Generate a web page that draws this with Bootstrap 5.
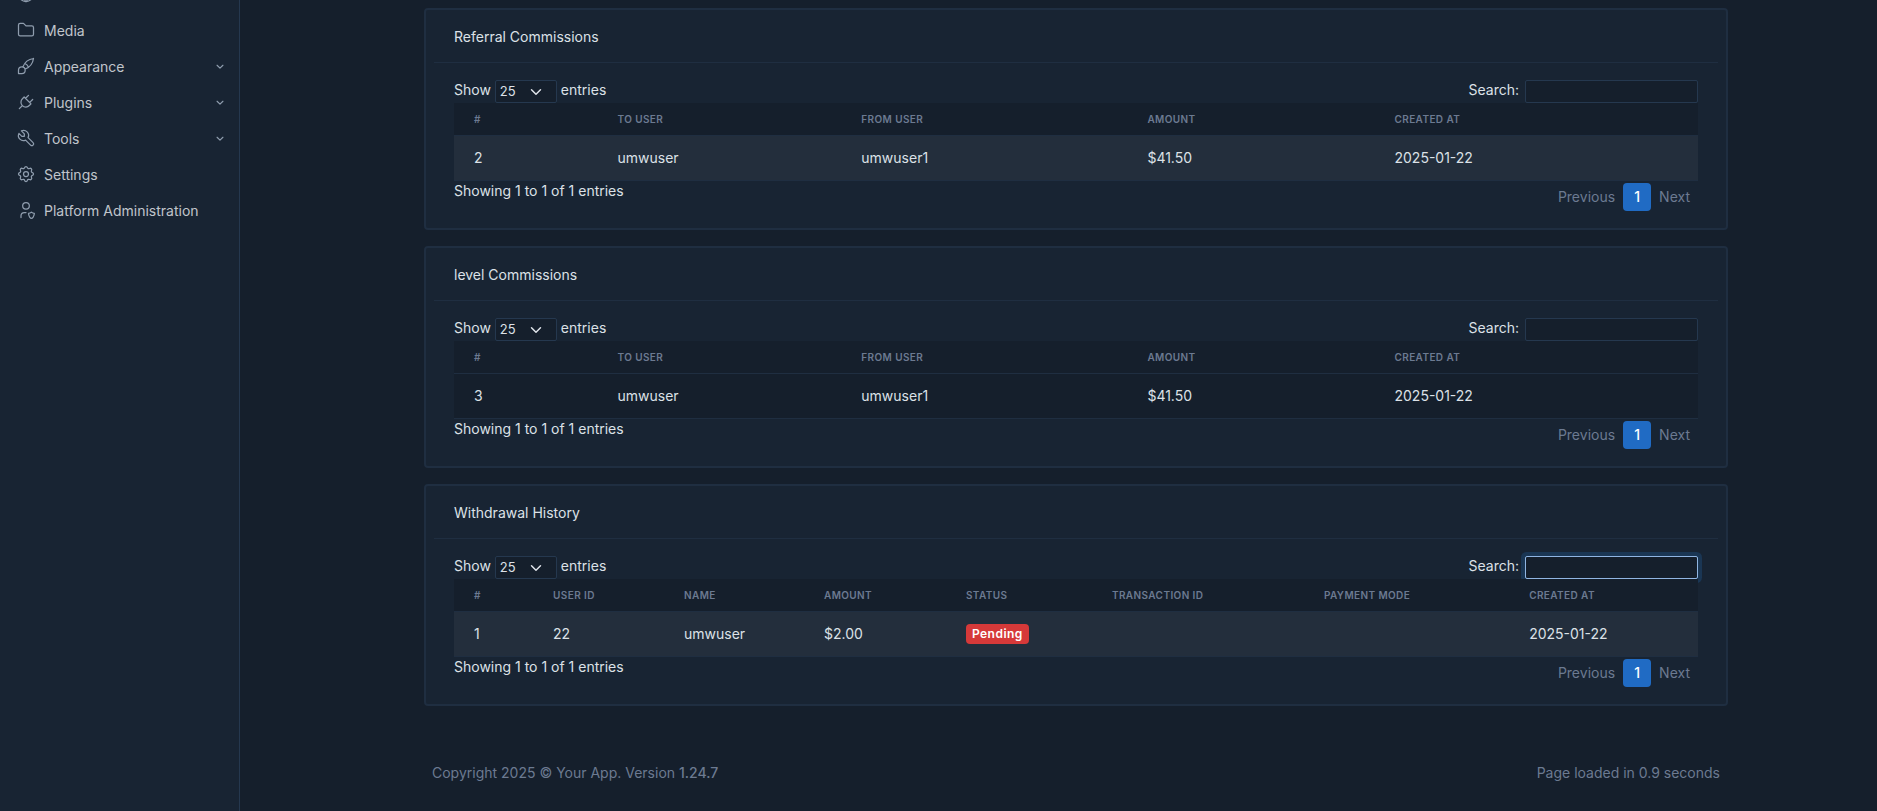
<!DOCTYPE html>
<html lang="en" data-bs-theme="dark">
<head>
<meta charset="utf-8">
<meta name="viewport" content="width=device-width, initial-scale=1">
<title>Commissions</title>
<link href="https://cdn.jsdelivr.net/npm/bootstrap@5.3.0/dist/css/bootstrap.min.css" rel="stylesheet">
<style>
  body { font-family: Inter, "Liberation Sans", sans-serif; font-size: 14px; line-height: 20px; background: #151f2c; color: #dce1e7; min-height: 100vh; }
  .side-menu { width: 240px; background: #182433; border-right: 1px solid #25384f; overflow: hidden; }
  .side-menu .nav { margin-top: -23px; }
  .side-menu .nav-link { height: 36px; padding: 0 12px 0 16px; gap: 8px; color: #c0c5cb; }
  .side-menu svg { flex: none; fill: none; stroke: #8f9dae; stroke-width: 2; stroke-linecap: round; stroke-linejoin: round; }
  .side-menu .menu-icon { stroke-width: 1.5; margin-top: -2px; }
  .page-area { min-width: 0; padding-left: 35px; }
  .page-area .container-xxl { max-width: 1320px; padding: 8px 8px 0; }
  .panel { background: #182433; border: 2px solid #1f2e41; border-radius: 4px; padding: 0 8px; margin-bottom: 16px; }
  .panel-title { font-size: 14px; line-height: 20px; font-weight: 400; color: #dce1e7; margin: 0; padding: 17px 20px 15px; border-bottom: 1px solid #1f2e41; }
  .panel-content { padding: 17px 20px; }
  .panel label { height: 23px; }
  .panel .form-select, .panel .form-control { height: 23px; min-height: 0; padding: 0 4px; border: 1px solid #25384f; border-radius: 2px; background-color: #151f2c; color: #dce1e7; font-size: 13px; line-height: 21px; }
  .panel .form-select { width: 62px; background-image: url("data:image/svg+xml,%3csvg xmlns='http://www.w3.org/2000/svg' viewBox='0 0 16 16'%3e%3cpath fill='none' stroke='%23dce1e7' stroke-linecap='round' stroke-linejoin='round' stroke-width='2' d='m2 5 6 6 6-6'/%3e%3c/svg%3e"); background-size: 12px; background-position: right 14px center; }
  .panel .form-control { width: 173px; margin-left: 6px; }
  .panel .form-control:focus { border-color: #90b5e2; box-shadow: 0 0 0 4px #1a3654; }
  .data-grid { position: relative; table-layout: fixed; margin: 0; --bs-table-bg: #151f2c; --bs-table-color: #dce1e7; --bs-table-striped-bg: #232e3c; --bs-table-striped-color: #dce1e7; border-color: #1f2e41; }
  .data-grid th { padding: 8px; font-size: 10px; line-height: 16px; font-weight: 600; letter-spacing: 0.04em; text-transform: uppercase; color: #6c7a91; }
  .data-grid td { padding: 12px 8px; line-height: 20px; }
  .data-grid th:first-child, .data-grid td:first-child { padding-left: 20px; }
  .status-tag { display: inline-block; font-size: 12px; line-height: 14px; font-weight: 600; padding: 3px 6px; border-radius: 4px; background: #d63939; color: #fff; letter-spacing: 0.04em; vertical-align: top; }
  .pagination { margin: 2px 0 0; --bs-pagination-font-size: 14px; }
  .pagination .page-item .page-link { min-width: 28px; height: 28px; margin: 0; padding: 4px 8px; border: 0; border-radius: 4px; text-align: center; line-height: 20px; background: none; color: #6c7a91; }
  .pagination .page-item.active .page-link { background: #206bc4; color: #fff; font-weight: 500; }
  .foot { color: #6c7a91; padding: 41px 8px 0; }
</style>
</head>
<body>
<div class="d-flex min-vh-100">
  <aside class="side-menu flex-shrink-0">
    <nav class="nav flex-column" aria-label="Main menu">
      <a class="nav-link d-flex align-items-center" href="#"><svg class="menu-icon" width="20" height="20" viewBox="0 0 24 24"><circle cx="12" cy="12" r="9"/><path d="M3.600 9h16.800M3.600 15h16.800M11.500 3a17 17 0 0 0 0 18M12.500 3a17 17 0 0 1 0 18"/></svg>Locations</a>
      <a class="nav-link d-flex align-items-center" href="#"><svg class="menu-icon" width="20" height="20" viewBox="0 0 24 24"><path d="M5 4h4l3 3h7a2 2 0 0 1 2 2v8a2 2 0 0 1 -2 2h-14a2 2 0 0 1 -2 -2v-11a2 2 0 0 1 2 -2"/></svg>Media</a>
      <a class="nav-link d-flex align-items-center" href="#"><svg class="menu-icon" width="20" height="20" viewBox="0 0 24 24"><path d="M3 21v-4a4 4 0 1 1 4 4h-4M21 3a16 16 0 0 0 -12.800 10.200M21 3a16 16 0 0 1 -10.200 12.800M10.600 9a9 9 0 0 1 4.400 4.400"/></svg>Appearance<svg class="ms-auto" width="14" height="14" viewBox="0 0 24 24"><path d="m7 9 5 5 5-5"/></svg></a>
      <a class="nav-link d-flex align-items-center" href="#"><svg class="menu-icon" width="20" height="20" viewBox="0 0 24 24"><path d="M9.785 6l8.215 8.215l-2.054 2.054a5.810 5.810 0 1 1 -8.215 -8.215l2.054 -2.054zM4 20l3.500 -3.500M15 4l-3.500 3.500M20 9l-3.500 3.500"/></svg>Plugins<svg class="ms-auto" width="14" height="14" viewBox="0 0 24 24"><path d="m7 9 5 5 5-5"/></svg></a>
      <a class="nav-link d-flex align-items-center" href="#"><svg class="menu-icon" width="20" height="20" viewBox="0 0 24 24"><path d="M7 10h3v-3l-3.500 -3.500a6 6 0 0 1 8 8l6 6a2 2 0 0 1 -3 3l-6 -6a6 6 0 0 1 -8 -8l3.500 3.500"/></svg>Tools<svg class="ms-auto" width="14" height="14" viewBox="0 0 24 24"><path d="m7 9 5 5 5-5"/></svg></a>
      <a class="nav-link d-flex align-items-center" href="#"><svg class="menu-icon" width="20" height="20" viewBox="0 0 24 24"><path d="M10.325 4.317c.426 -1.756 2.924 -1.756 3.350 0a1.724 1.724 0 0 0 2.573 1.066c1.543 -.94 3.310 .826 2.370 2.370a1.724 1.724 0 0 0 1.065 2.572c1.756 .426 1.756 2.924 0 3.350a1.724 1.724 0 0 0 -1.066 2.573c.94 1.543 -.826 3.310 -2.370 2.370a1.724 1.724 0 0 0 -2.572 1.065c-.426 1.756 -2.924 1.756 -3.350 0a1.724 1.724 0 0 0 -2.573 -1.066c-1.543 .94 -3.310 -.826 -2.370 -2.370a1.724 1.724 0 0 0 -1.065 -2.572c-1.756 -.426 -1.756 -2.924 0 -3.350a1.724 1.724 0 0 0 1.066 -2.573c-.94 -1.543 .826 -3.310 2.370 -2.370c1 .608 2.296 .070 2.572 -1.065z"/><circle cx="12" cy="12" r="3"/></svg>Settings</a>
      <a class="nav-link d-flex align-items-center" href="#"><svg class="menu-icon" width="20" height="20" viewBox="0 0 24 24"><path d="M6 21v-2a4 4 0 0 1 4 -4h2M22 16c0 4 -2.500 6 -3.500 6s-3.500 -2 -3.500 -6c1 0 2.500 -.5 3.500 -1.500c1 1 2.500 1.500 3.500 1.500zM8 7a4 4 0 1 0 8 0a4 4 0 0 0 -8 0"/></svg>Platform Administration</a>
    </nav>
  </aside>

  <main class="page-area flex-grow-1">
    <div class="container-xxl">
      <section class="panel">
        <h2 class="panel-title">Referral Commissions</h2>
        <div class="panel-content">
          <div class="d-flex justify-content-between">
            <label class="d-flex align-items-start gap-1">Show <select class="form-select"><option>10</option><option selected>25</option><option>50</option></select> entries</label>
            <label class="d-flex align-items-start">Search: <input type="search" class="form-control"></label>
          </div>
          <table class="table table-striped data-grid">
            <colgroup><col style="width:12.5%"><col style="width:19.6%"><col style="width:23%"><col style="width:19.86%"><col></colgroup>
            <thead><tr><th>#</th><th>To user</th><th>From user</th><th>Amount</th><th>Created at</th></tr></thead>
            <tbody><tr><td>2</td><td>umwuser</td><td>umwuser1</td><td>$41.50</td><td>2025-01-22</td></tr></tbody>
          </table>
          <div class="d-flex justify-content-between">
            <div>Showing 1 to 1 of 1 entries</div>
            <ul class="pagination"><li class="page-item"><a class="page-link" href="#">Previous</a></li><li class="page-item active"><a class="page-link" href="#">1</a></li><li class="page-item"><a class="page-link" href="#">Next</a></li></ul>
          </div>
        </div>
      </section>

      <section class="panel">
        <h2 class="panel-title">level Commissions</h2>
        <div class="panel-content">
          <div class="d-flex justify-content-between">
            <label class="d-flex align-items-start gap-1">Show <select class="form-select"><option>10</option><option selected>25</option><option>50</option></select> entries</label>
            <label class="d-flex align-items-start">Search: <input type="search" class="form-control"></label>
          </div>
          <table class="table data-grid">
            <colgroup><col style="width:12.5%"><col style="width:19.6%"><col style="width:23%"><col style="width:19.86%"><col></colgroup>
            <thead><tr><th>#</th><th>To user</th><th>From user</th><th>Amount</th><th>Created at</th></tr></thead>
            <tbody><tr><td>3</td><td>umwuser</td><td>umwuser1</td><td>$41.50</td><td>2025-01-22</td></tr></tbody>
          </table>
          <div class="d-flex justify-content-between">
            <div>Showing 1 to 1 of 1 entries</div>
            <ul class="pagination"><li class="page-item"><a class="page-link" href="#">Previous</a></li><li class="page-item active"><a class="page-link" href="#">1</a></li><li class="page-item"><a class="page-link" href="#">Next</a></li></ul>
          </div>
        </div>
      </section>

      <section class="panel">
        <h2 class="panel-title">Withdrawal History</h2>
        <div class="panel-content">
          <div class="d-flex justify-content-between">
            <label class="d-flex align-items-start gap-1">Show <select class="form-select"><option>10</option><option selected>25</option><option>50</option></select> entries</label>
            <label class="d-flex align-items-start">Search: <input type="search" class="form-control" autofocus></label>
          </div>
          <table class="table table-striped data-grid">
            <colgroup><col style="width:7.32%"><col style="width:10.53%"><col style="width:11.25%"><col style="width:11.41%"><col style="width:11.74%"><col style="width:17.04%"><col style="width:16.5%"><col></colgroup>
            <thead><tr><th>#</th><th>User ID</th><th>Name</th><th>Amount</th><th>Status</th><th>Transaction ID</th><th>Payment mode</th><th>Created at</th></tr></thead>
            <tbody><tr><td>1</td><td>22</td><td>umwuser</td><td>$2.00</td><td><span class="badge status-tag">Pending</span></td><td></td><td></td><td>2025-01-22</td></tr></tbody>
          </table>
          <div class="d-flex justify-content-between">
            <div>Showing 1 to 1 of 1 entries</div>
            <ul class="pagination"><li class="page-item"><a class="page-link" href="#">Previous</a></li><li class="page-item active"><a class="page-link" href="#">1</a></li><li class="page-item"><a class="page-link" href="#">Next</a></li></ul>
          </div>
        </div>
      </section>

      <footer class="foot d-flex justify-content-between">
        <div>Copyright 2025 © Your App. Version <span class="fw-medium">1.24.7</span></div>
        <div>Page loaded in 0.9 seconds</div>
      </footer>
    </div>
  </main>
</div>
<script src="https://cdn.jsdelivr.net/npm/bootstrap@5.3.0/dist/js/bootstrap.bundle.min.js"></script>
</body>
</html>
